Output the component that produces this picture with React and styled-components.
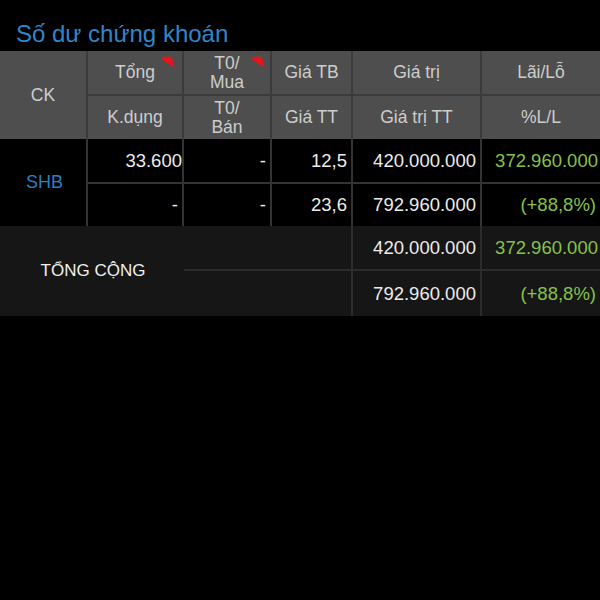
import React from "react";
import styled, { createGlobalStyle } from "styled-components";

const GlobalStyle = createGlobalStyle`
  html, body {
    margin: 0;
    padding: 0;
    background: #000;
  }
  body {
    font-family: "Liberation Sans", Arial, sans-serif;
  }
`;

const COLS = "88px 96px 88px 81px 129px 118px";

const Page = styled.div`
  width: 600px;
  height: 600px;
  background: #000;
  overflow: hidden;
`;

const Title = styled.div`
  height: 51px;
  box-sizing: border-box;
  padding: 0 0 3px 16px;
  display: flex;
  align-items: flex-end;
  font-size: 24px;
  line-height: 28px;
  color: #2f87c9;
`;

const Section = styled.div`
  display: grid;
  grid-template-columns: ${COLS};
  grid-template-rows: ${(p) => p.$rows};
  background: ${(p) => p.$bg};
`;

const Cell = styled.div`
  position: relative;
  box-sizing: border-box;
  display: flex;
  align-items: center;
  justify-content: ${(p) => (p.$align === "right" ? "flex-end" : "center")};
  text-align: ${(p) => (p.$align === "right" ? "right" : "center")};
  padding: ${(p) => (p.$align === "right" ? "0 4px 0 0" : "0")};
  grid-column: ${(p) => p.$col || "auto"};
  grid-row: ${(p) => p.$row || "auto"};
  border-right: ${(p) => (p.$r ? `2px solid ${p.$line}` : "none")};
  border-bottom: ${(p) => (p.$b ? `2px solid ${p.$line}` : "none")};
  white-space: nowrap;
`;

const HeadText = styled.span`
  font-size: 17.5px;
  line-height: 19px;
  color: #cdcdcd;
`;

const Value = styled.span`
  font-size: 18.5px;
  color: ${(p) => (p.$green ? "#86c24a" : "#ececec")};
  margin-right: ${(p) => p.$shift || 0}px;
`;

const Code = styled.span`
  font-size: 18px;
  color: #2d7ec0;
  margin-left: 3px;
`;

const TotalLabel = styled.span`
  font-size: 17px;
  color: #f0f0f0;
  margin-left: 2px;
`;

const Marker = styled.svg`
  position: absolute;
  top: 5px;
  right: ${(p) => p.$right}px;
`;

const Flag = ({ right }) => (
  <Marker $right={right} width="14" height="12" viewBox="0 0 14 12">
    <path
      d="M0.5 1.8 Q4 0.2 8.5 0.4 Q10.5 0.6 11.3 2.6 L13.6 11.2 Q9 8.8 5.2 6.4 Q1.2 4 0.5 1.8 Z"
      fill="#e8141b"
    />
  </Marker>
);

const HL = "#3b3b3b";
const BL = "#333333";
const TL = "#2c2c2c";

export default function App() {
  return (
    <Page>
      <GlobalStyle />
      <Title>Số dư chứng khoán</Title>

      <Section $rows="45px 43px" $bg="#4e4e4e">
        <Cell $row="1 / span 2" $r $line={HL}>
          <HeadText>CK</HeadText>
        </Cell>
        <Cell $r $b $line={HL}>
          <HeadText>Tổng</HeadText>
          <Flag right={7} />
        </Cell>
        <Cell $r $b $line={HL}>
          <HeadText>T0/<br />Mua</HeadText>
          <Flag right={5} />
        </Cell>
        <Cell $r $b $line={HL}>
          <HeadText>Giá TB</HeadText>
        </Cell>
        <Cell $r $b $line={HL}>
          <HeadText>Giá trị</HeadText>
        </Cell>
        <Cell $b $line={HL}>
          <HeadText>Lãi/Lỗ</HeadText>
        </Cell>
        <Cell $r $line={HL}>
          <HeadText>K.dụng</HeadText>
        </Cell>
        <Cell $r $line={HL}>
          <HeadText>T0/<br />Bán</HeadText>
        </Cell>
        <Cell $r $line={HL}>
          <HeadText>Giá TT</HeadText>
        </Cell>
        <Cell $r $line={HL}>
          <HeadText>Giá trị TT</HeadText>
        </Cell>
        <Cell $line={HL}>
          <HeadText>%L/L</HeadText>
        </Cell>
      </Section>

      <Section $rows="45px 42px" $bg="#000">
        <Cell $row="1 / span 2" $r $line={BL}>
          <Code>SHB</Code>
        </Cell>
        <Cell $align="right" $r $b $line={BL}>
          <Value $shift={-4}>33.600</Value>
        </Cell>
        <Cell $align="right" $r $b $line={BL}>
          <Value>-</Value>
        </Cell>
        <Cell $align="right" $r $b $line={BL}>
          <Value>12,5</Value>
        </Cell>
        <Cell $align="right" $r $b $line={BL}>
          <Value>420.000.000</Value>
        </Cell>
        <Cell $align="right" $b $line={BL}>
          <Value $green $shift={-2}>372.960.000</Value>
        </Cell>
        <Cell $align="right" $r $line={BL}>
          <Value>-</Value>
        </Cell>
        <Cell $align="right" $r $line={BL}>
          <Value>-</Value>
        </Cell>
        <Cell $align="right" $r $line={BL}>
          <Value>23,6</Value>
        </Cell>
        <Cell $align="right" $r $line={BL}>
          <Value>792.960.000</Value>
        </Cell>
        <Cell $align="right" $line={BL}>
          <Value $green>(+88,8%)</Value>
        </Cell>
      </Section>

      <Section $rows="45px 45px" $bg="#161616">
        <Cell $col="1 / span 2" $row="1 / span 2" $line={TL}>
          <TotalLabel>TỔNG CỘNG</TotalLabel>
        </Cell>
        <Cell $col="3 / span 2" $r $b $line={TL} />
        <Cell $align="right" $r $b $line={TL}>
          <Value>420.000.000</Value>
        </Cell>
        <Cell $align="right" $b $line={TL}>
          <Value $green $shift={-2}>372.960.000</Value>
        </Cell>
        <Cell $col="3 / span 2" $r $line={TL} />
        <Cell $align="right" $r $line={TL}>
          <Value>792.960.000</Value>
        </Cell>
        <Cell $align="right" $line={TL}>
          <Value $green>(+88,8%)</Value>
        </Cell>
      </Section>
    </Page>
  );
}
